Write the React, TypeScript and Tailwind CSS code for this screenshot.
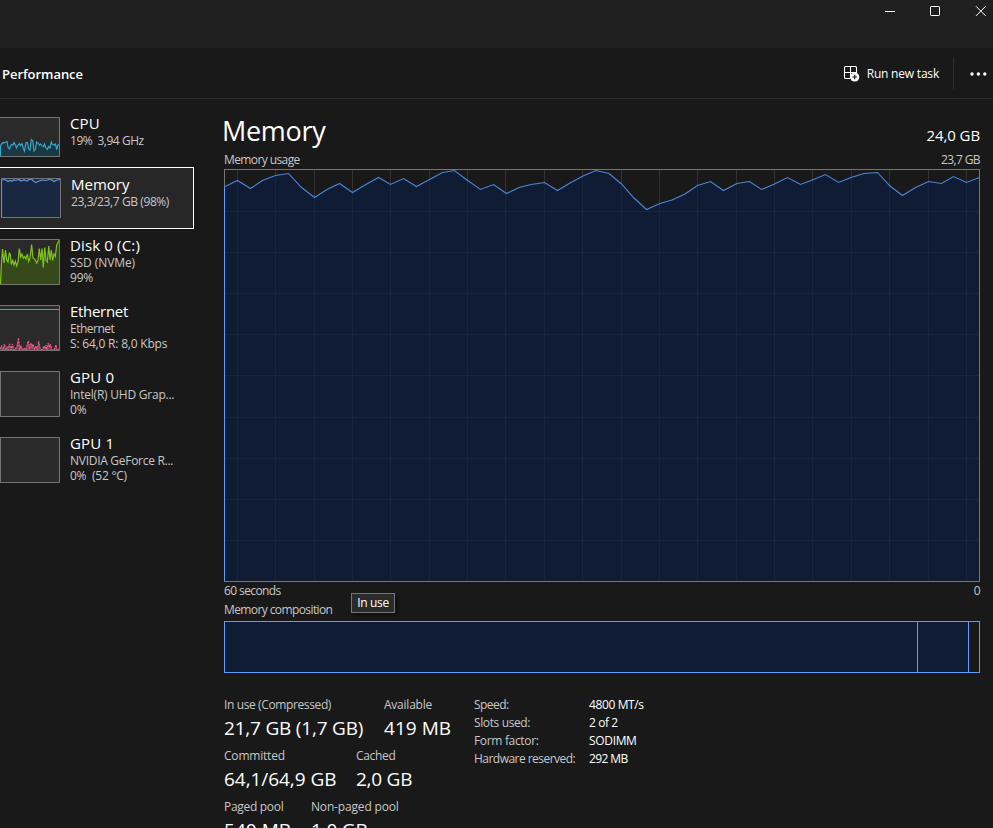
import React from 'react';

type Point = [number, number];

const toPath = (points: Point[]) => points.map(([x, y]) => `${x},${y}`).join(' ');

const usage: Point[] = [
  [0, 18], [13.5, 11.5], [26.5, 19.5], [38.5, 11.5], [51.5, 6.5], [64.5, 4.5], [77, 18], [90.5, 28.5], [103, 20.5], [115.5, 14.5],
  [128.5, 23.5], [141, 16], [154.5, 8.5], [166.5, 15.5], [179.5, 9.5], [192.5, 17.5], [205.5, 10.5], [218.5, 3.5], [230.5, 1.5], [243, 11],
  [256.5, 20.5], [269.5, 15.5], [282.5, 24.5], [295, 18.5], [307, 15.5], [320.5, 13.5], [333.5, 21.5], [346, 14], [359, 7], [372, 1.5],
  [385, 4.5], [397.5, 15], [410, 29], [422.5, 40.5], [436, 34.5], [448, 31], [461, 25], [473.5, 16.5], [486.5, 12.5], [499.5, 21.5],
  [513, 14.5], [525.5, 12.5], [537.5, 20.5], [550.5, 15], [563.5, 8.5], [576.5, 15.5], [589.5, 10.5], [601.5, 5.5], [614.5, 13.5], [627, 8.5],
  [640, 4.5], [653.5, 3.5], [666, 17], [678.5, 26.5], [691.5, 18.5], [704.5, 12.5], [717.5, 14.5], [729.5, 7.5], [742.5, 13.5], [755.5, 8.5],
];

const cpu: Point[] = [
  [0.5, 40], [0.5, 29], [1.5, 27], [3, 25.5], [4, 26], [5.5, 25], [7, 24.5], [8, 30], [9.5, 32], [10.5, 29], [11.5, 27.5], [13, 28], [14, 25.5], [15.5, 28],
  [16.5, 31], [18, 28], [19.5, 26.5], [20.5, 28.5], [22, 26.5], [23.5, 32], [24.5, 34], [26, 25.5], [27.5, 25.5], [28.5, 32], [30, 33],
  [31.3, 22.5], [32.7, 23.5], [34, 34], [35.5, 32], [36.5, 25], [38, 26], [39.5, 28], [40.5, 27], [42, 29], [43.5, 29.5], [44.5, 27],
  [46, 31], [47.5, 32.5], [48.5, 29.5], [50, 31], [51.3, 25], [52.5, 27.5], [54, 28], [55.5, 27], [56.7, 32.5], [58, 28], [59, 27.5],
];

const memory: Point[] = [
  [0.5, 40], [0.5, 2], [3, 1.5], [5, 2], [7, 3.5], [9, 2.5], [11, 3], [13, 2], [15, 2.5], [18, 1.5], [20, 3], [23, 2], [26, 3],
  [28, 1.5], [31, 1.5], [33, 3.5], [35, 4.5], [38, 3], [41, 2], [45, 2.5], [48, 1.5], [51, 2], [53, 3.5], [56, 2], [59, 1.5],
];

const disk: Point[] = [
  [0.5, 46], [1.3, 26], [2.5, 10], [4, 24], [5.5, 11], [6.7, 21], [8, 23], [9.3, 14], [10.3, 15], [11.3, 25.5], [12.7, 21.5], [14, 26],
  [15.3, 22], [16.7, 27], [18, 23], [19.3, 9.5], [20.7, 18], [22, 15], [23.3, 19], [24.7, 17.5], [26, 20], [27.3, 15], [28.7, 22.5],
  [30, 19], [31.6, 5.5], [33, 19], [34.7, 20], [36.7, 24], [38, 21], [39.3, 9.5], [40.7, 21], [42, 9.5], [43.3, 28.5], [44.7, 8.5],
  [46, 21.5], [47.3, 23], [48.7, 7], [50, 21], [51.3, 11], [52.7, 21.5], [54, 15], [55.3, 17.5], [56.7, 6], [58, 3.5], [59.3, 1],
];

const ethernet: Point[] = [
  [0, 44], [1.5, 41], [3, 45], [4.5, 39], [5.5, 44], [7, 42], [8, 45], [9.5, 39], [11, 45], [12.5, 39], [13.5, 44], [15, 45], [17, 41],
  [18.5, 33], [19.7, 44], [21, 41], [22.5, 45], [24, 43], [26, 45], [27.5, 38], [28.5, 36], [29.5, 44], [31, 38], [32, 43], [33, 39],
  [34.5, 44], [36, 41], [37.5, 45], [38.7, 36], [40, 43], [42, 45], [44, 41], [45, 44], [46, 40], [47, 45], [48.3, 38], [49.5, 42],
  [50.5, 40], [52, 45], [54, 45], [56, 40], [57, 45], [59, 44],
];

interface Device {
  name: string;
  nameClass: string;
  lines: { text: string; className: string }[];
  height: number;
  chart?: { points: Point[]; stroke: string; fill: string; limit?: number; dash?: string };
  active?: boolean;
}

const devices: Device[] = [
  {
    name: 'CPU', nameClass: 'tracking-[0.1px]', height: 40,
    lines: [{ text: '19%  3,94 GHz', className: 'tracking-[-0.48px]' }],
    chart: { points: cpu, stroke: '#2fa8cf', fill: '#1b3840' },
  },
  {
    name: 'Memory', nameClass: 'tracking-[0px]', height: 40, active: true,
    lines: [{ text: '23,3/23,7 GB (98%)', className: 'tracking-[-0.4px]' }],
    chart: { points: memory, stroke: '#5596f0', fill: '#1a2740' },
  },
  {
    name: 'Disk 0 (C:)', nameClass: 'tracking-[0.15px]', height: 46,
    lines: [{ text: 'SSD (NVMe)', className: 'tracking-[-0.07px]' }, { text: '99%', className: 'tracking-[-0.2px]' }],
    chart: { points: disk, stroke: '#80c21c', fill: '#36491a' },
  },
  {
    name: 'Ethernet', nameClass: 'tracking-[-0.3px]', height: 46,
    lines: [{ text: 'Ethernet', className: 'tracking-[-0.5px]' }, { text: 'S: 64,0 R: 8,0 Kbps', className: 'tracking-[-0.2px]' }],
    chart: { points: ethernet, stroke: '#ea5c88', fill: '#8a3c56', limit: 4.5, dash: '2 1' },
  },
  {
    name: 'GPU 0', nameClass: 'tracking-[0.2px]', height: 46,
    lines: [{ text: 'Intel(R) UHD Grap...', className: 'tracking-[-0.23px]' }, { text: '0%', className: 'tracking-[-0.2px]' }],
  },
  {
    name: 'GPU 1', nameClass: 'tracking-[0.2px]', height: 46,
    lines: [{ text: 'NVIDIA GeForce R...', className: 'tracking-[-0.28px]' }, { text: '0%  (52 °C)', className: 'tracking-[-0.25px]' }],
  },
];

const stats = [
  [
    { label: 'In use (Compressed)', value: '21,7 GB (1,7 GB)', width: 'w-[160px]', labelClass: 'tracking-[-0.38px]', valueClass: 'tracking-[-0.2px]' },
    { label: 'Available', value: '419 MB', width: 'w-[80px]', labelClass: 'tracking-[-0.23px]', valueClass: 'tracking-[0.05px]' },
  ],
  [
    { label: 'Committed', value: '64,1/64,9 GB', width: 'w-[132px]', labelClass: 'tracking-[-0.2px]', valueClass: 'tracking-[-0.05px]' },
    { label: 'Cached', value: '2,0 GB', width: 'w-[80px]', labelClass: 'tracking-[-0.33px]', valueClass: 'tracking-[-0.25px]' },
  ],
  [
    { label: 'Paged pool', value: '540 MB', width: 'w-[87px]', labelClass: 'tracking-[-0.3px]', valueClass: 'tracking-[0.05px]' },
    { label: 'Non-paged pool', value: '1,0 GB', width: 'w-[120px]', labelClass: 'tracking-[-0.17px]', valueClass: 'tracking-[-0.2px]' },
  ],
];

const specs = [
  { label: 'Speed:', value: '4800 MT/s', labelClass: 'tracking-[-0.55px]', valueClass: 'tracking-[-0.38px]' },
  { label: 'Slots used:', value: '2 of 2', labelClass: 'tracking-[-0.38px]', valueClass: 'tracking-[-0.4px]' },
  { label: 'Form factor:', value: 'SODIMM', labelClass: 'tracking-[-0.33px]', valueClass: 'tracking-[-0.33px]' },
  { label: 'Hardware reserved:', value: '292 MB', labelClass: 'tracking-[-0.53px]', valueClass: 'tracking-[-0.6px]' },
];

const TitleBar: React.FC = () => (
  <div className="flex h-12 shrink-0 justify-end bg-[#202020]">
    <svg width="113" height="24" fill="none" stroke="#fff">
      <path d="M5 11.5h10" />
      <rect x="50.5" y="6.5" width="9" height="9" rx="0.7" />
      <path d="M96 6.3l9.6 9.6M105.6 6.3l-9.6 9.6" />
    </svg>
  </div>
);

const Toolbar: React.FC = () => (
  <div className="flex h-[51px] shrink-0 items-center border-b border-[#2b2b2b] pl-0.5">
    <h1 className="mt-0.5 text-[13px] leading-5 font-semibold tracking-[-0.05px] text-white">Performance</h1>
    <button className="mt-0.5 ml-auto flex items-center gap-[7px] text-xs leading-5 tracking-[-0.2px] text-white">
      <svg className="-mt-0.5" width="17" height="17" viewBox="0 0 17 17" fill="none" stroke="#fff">
        <path d="M13.5 8V2.5a1 1 0 0 0-1-1h-10a1 1 0 0 0-1 1v10a1 1 0 0 0 1 1H7M7.5 1.500v12M1.500 7.500h12" strokeWidth="1.1" />
        <circle cx="11.700" cy="12" r="4.600" fill="#fff" stroke="none" />
        <path d="M11.700 9.700v4.600M9.400 12H14" stroke="#1a1a1a" strokeWidth="1.2" />
      </svg>
      Run new task
    </button>
    <div className="ml-[14px] h-8 w-px bg-[#2f2f2f]" />
    <svg className="mt-px ml-4" width="23" height="8" fill="#fff">
      <circle cx="2" cy="4" r="1.7" />
      <circle cx="8.4" cy="4" r="1.7" />
      <circle cx="14.8" cy="4" r="1.7" />
    </svg>
  </div>
);

const DeviceRow: React.FC<{ device: Device }> = ({ device }) => {
  const { chart } = device;
  return (
    <div
      className={
        device.active
          ? '-mb-px flex h-[62px] border border-l-0 border-white bg-[#272727] pt-[10px] pl-px'
          : device.height === 40
            ? 'flex h-[61px] pt-[11px]'
            : 'flex h-[66px] pt-[11px]'
      }
    >
      <svg width="60" height={device.height} className="shrink-0">
        <rect width="60" height={device.height} fill="#2a2a2a" />
        {chart && (
          <>
            <polygon points={`0,${device.height} ${toPath(chart.points)} 60,${device.height}`} fill={chart.fill} />
            <polyline points={toPath(chart.points)} fill="none" stroke={chart.stroke} strokeWidth="1.2" strokeDasharray={chart.dash} />
            {chart.limit && <path d={`M0 ${chart.limit}h60`} stroke={chart.stroke} />}
          </>
        )}
        <path
          d={`M0 .5H59.5V${device.height - 0.5}H0${chart ? '' : `M.5 0V${device.height}`}`}
          fill="none"
          stroke="#757575"
        />
      </svg>
      <div className="-mt-1 ml-[10px] whitespace-pre">
        <p className={`text-[15px] leading-5 text-white ${device.nameClass}`}>{device.name}</p>
        {device.lines.map((line) => (
          <p key={line.text} className={`text-xs leading-[15px] text-[#c8c8c8] ${line.className}`}>{line.text}</p>
        ))}
      </div>
    </div>
  );
};

const UsageChart: React.FC = () => (
  <svg width="756" height="413" className="block">
    {Array.from({ length: 20 }, (_, i) => Math.round(12.9 + i * 38.37) + 0.5).map((x) => (
      <path key={x} d={`M${x} 0V413`} stroke="#313131" />
    ))}
    {Array.from({ length: 9 }, (_, i) => Math.round(41.6 + i * 41.2) + 0.5).map((y) => (
      <path key={y} d={`M0 ${y}H756`} stroke="#313131" />
    ))}
    <polygon points={`0,413 ${toPath(usage)} 756,413`} fill="#081e44" fillOpacity="0.6" />
    <rect x="0.5" y="0.5" width="755" height="412" fill="none" stroke="#757575" />
    <path d="M.5 18V412" stroke="#5a9df8" />
    <polyline points={toPath(usage)} fill="none" stroke="#4c86da" strokeWidth="1.1" />
  </svg>
);

const Composition: React.FC = () => (
  <div className="flex h-[52px] border border-[#5a9df8]">
    <div className="w-[692px] bg-[#0f1c33]" />
    <div className="w-[52px] border-x border-[#5a9df8] bg-[#0f1c33]" />
  </div>
);

const MemoryPanel: React.FC = () => (
  <main className="relative ml-[30px] w-[756px] text-xs leading-[18px] tracking-[-0.6px] text-[#c8c8c8]">
    <div className="flex h-[52px] items-end justify-between text-white">
      <h2 className="-ml-[2px] h-[41px] text-[27px] leading-[42px] tracking-[-0.3px]">Memory</h2>
      <p className="h-[26px] text-[15px] leading-5 tracking-[-0.1px]">24,0 GB</p>
    </div>
    <div className="flex h-[18px] justify-between">
      <p>Memory usage</p>
      <p>23,7 GB</p>
    </div>
    <UsageChart />
    <div className="flex h-[19px] justify-between">
      <p>60 seconds</p>
      <p>0</p>
    </div>
    <p className="h-5">Memory composition</p>
    <Composition />
    <div className="mt-[23px] flex">
      <div className="w-[250px]">
        {stats.map((row) => (
          <div key={row[0].label} className="flex h-[51px] whitespace-nowrap">
            {row.map((s) => (
              <div key={s.label} className={s.width}>
                <p className={s.labelClass}>{s.label}</p>
                <p className={`text-[19px] leading-7 text-white ${s.valueClass}`}>{s.value}</p>
              </div>
            ))}
          </div>
        ))}
      </div>
      <div>
        {specs.map((s) => (
          <div key={s.label} className="flex h-[18px]">
            <p className={`w-[115px] ${s.labelClass}`}>{s.label}</p>
            <p className={`text-white ${s.valueClass}`}>{s.value}</p>
          </div>
        ))}
      </div>
    </div>
    <div className="absolute top-[494px] left-[127px] flex h-5 w-11 items-center justify-center border border-[#767676] bg-[#2b2b2b] tracking-[-0.33px] text-white shadow-[3px_3px_3px_rgba(0,0,0,0.35)]">
      In use
    </div>
  </main>
);

export default function App() {
  return (
    <div className="flex h-[828px] w-[993px] flex-col overflow-hidden bg-[#191919] font-['Open_Sans',sans-serif]">
      <TitleBar />
      <Toolbar />
      <div className="flex min-h-0 flex-1">
        <aside className="w-[194px] shrink-0 pt-[7px]">
          {devices.map((d) => (
            <DeviceRow key={d.name} device={d} />
          ))}
        </aside>
        <MemoryPanel />
      </div>
    </div>
  );
}
